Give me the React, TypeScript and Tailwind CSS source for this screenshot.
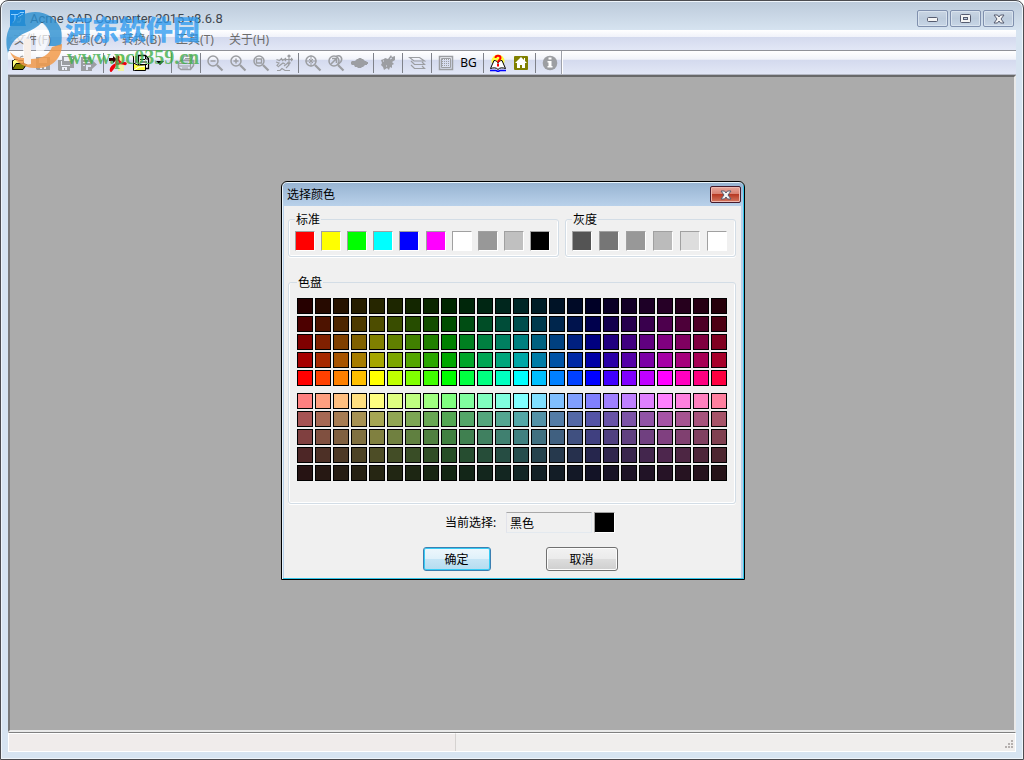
import { useState } from "react";
import type { ReactNode } from "react";

const STANDARD: [string, string][] = [
  ["红色", "#ff0000"],
  ["黄色", "#ffff00"],
  ["绿色", "#00ff00"],
  ["青色", "#00ffff"],
  ["蓝色", "#0000ff"],
  ["洋红", "#ff00ff"],
  ["白色", "#ffffff"],
  ["8", "#989898"],
  ["9", "#c0c0c0"],
  ["黑色", "#000000"],
];

const GRAYS: [string, string][] = [
  ["250", "#545454"],
  ["251", "#767676"],
  ["252", "#989898"],
  ["253", "#bbbbbb"],
  ["254", "#dddddd"],
  ["255", "#ffffff"],
];

const LEVELS = [1, 0.65, 0.5, 0.3, 0.15];

function channel(distance: number) {
  return Math.max(0, Math.min(1, 2 - distance / 60));
}

function paletteColor(column: number, level: number, pale: boolean) {
  const hue = column * 15;
  const parts = [0, 120, 240].map((center) => {
    const d = Math.abs(hue - center);
    const pure = channel(Math.min(d, 360 - d));
    const value = pale ? 0.5 + pure / 2 : pure;
    return Math.round(value * level * 255);
  });
  return `rgb(${parts.join(",")})`;
}

type Pick = (name: string, color: string) => void;

function Swatch({ name, color, onPick }: { name: string; color: string; onPick: Pick }) {
  return (
    <button
      type="button"
      aria-label={name}
      onClick={() => onPick(name, color)}
      className="size-5 border border-t-[#a0a0a0] border-l-[#a0a0a0] border-r-white border-b-white"
      style={{ backgroundColor: color }}
    />
  );
}

function PaletteBlock({ pale, onPick }: { pale: boolean; onPick: Pick }) {
  const levels = pale ? LEVELS : [...LEVELS].reverse();
  return (
    <div className="grid grid-cols-[repeat(24,16px)] gap-0.5">
      {levels.map((level, row) =>
        Array.from({ length: 24 }, (_, column) => {
          const color = paletteColor(column, level, pale);
          const index = 10 + column * 10 + (pale ? row * 2 + 1 : (4 - row) * 2);
          return (
            <button
              key={index}
              type="button"
              aria-label={String(index)}
              onClick={() => onPick(String(index), color)}
              className="size-4 border border-black"
              style={{ backgroundColor: color }}
            />
          );
        }),
      )}
    </div>
  );
}

function Group({ title, className, children }: { title: string; className: string; children: ReactNode }) {
  return (
    <fieldset className={`min-w-0 rounded-[3px] border border-[#d3dde6] shadow-[inset_1px_0_0_#fff,inset_-1px_-1px_0_#fff,0_1px_0_#fff] ${className}`}>
      <legend className="px-px pt-px leading-3.5">{title}</legend>
      {children}
    </fieldset>
  );
}

function Icon({ children }: { children: ReactNode }) {
  return (
    <svg viewBox="0 0 18 18" className="size-4.5" fill="none" aria-hidden="true">
      {children}
    </svg>
  );
}

function Tool({ label, children }: { label: string; children: ReactNode }) {
  return (
    <button type="button" aria-label={label} className="flex h-full w-[23px] shrink-0 items-center justify-center">
      {children}
    </button>
  );
}

function Divider() {
  return (
    <span className="flex h-5 w-1.5 shrink-0 justify-center">
      <span className="w-px bg-[#7f828a]" />
    </span>
  );
}

const G = "#9c9ea2";

function Lens({ children }: { children?: ReactNode }) {
  return (
    <Icon>
      <g stroke={G}>
        <circle cx="7" cy="7" r="5" strokeWidth="1.5" />
        <path d="M11 11l5.500 5.500" strokeWidth="2.200" />
        {children}
      </g>
    </Icon>
  );
}

function Toolbar() {
  return (
    <div className="flex h-6 items-center border-b border-[#b4b8c4] bg-[linear-gradient(to_bottom,#ffffff,#f1f3fa_36%,#d4daee_40%,#e2e7f6)]">
      <Tool label="打开">
        <Icon>
          <path d="M1.500 15.500v-9h1l1-1h3l1 1h5v3" fill="#ffff80" stroke="#000" />
          <path d="M1.500 15.500l3.500-6h11l-4 6z" fill="#808000" stroke="#000" />
          <path d="M9 3.500c2-2 4-1.500 5 .5m1.500-2.500v3h-3" stroke="#777" />
        </Icon>
      </Tool>
      <Tool label="保存">
        <Icon>
          <path d="M2 3h14v13H3l-1-1z" fill={G} />
          <path d="M5 4h8v5H5zM6 12h6v3h-2v-2H8v2H6z" fill="#eceef6" />
        </Icon>
      </Tool>
      <Tool label="另存为">
        <Icon>
          <path d="M5 2h12v12h-4v3H2L1 16V6h4z" fill={G} />
          <path d="M7 3h7v4H7zM4 7h1v4h8v1H4zM5 13h5v3H8v-2H7v2H5zM15 4h1v1h-1z" fill="#eceef6" />
        </Icon>
      </Tool>
      <Tool label="导出">
        <Icon>
          <path d="M1 3h10v3h1l5 4.500-5 4.500v2H1z" fill={G} />
          <path d="M3 5h5v1H3zM3 8h7v1H3zM3 11h2v1H3zM6 11h5v2H8v3H6z" fill="#dfe4f3" />
        </Icon>
      </Tool>
      <Divider />
      <Tool label="转换为 PDF">
        <Icon>
          <path d="M9 1h6v16H9z" fill="#ffff66" fillOpacity=".6" />
          <path d="M0 4h4V2l4 3.500L4 9V7H0z" fill="#300" />
          <path d="M2 17c3-3 6-8 6-13 0-2 2-2 1.500 0-.8 2 2 6 6.500 5 1.500 0 1 2-1 1-3-1.500-7-.5-10 1-2.500 1.500-4 4.500-3 6z" stroke="#f0000c" strokeWidth="1.900" />
        </Icon>
      </Tool>
      <Tool label="批量转换">
        <Icon>
          <path d="M6.500 1.500h7l3 3v10h-10z" fill="#fff" stroke="#000" strokeWidth="1.300" />
          <path d="M8 5.500h5M8 8h7M8 10.500h7M13.500 2v3h3" stroke="#000" />
          <path d="M1.500 2v8M4 2v7" stroke="#000" />
          <path d="M1.500 16.500V9l4 2h8v5.500z" fill="#ffff40" stroke="#000" />
          <path d="M2 16l5-3 6-1" stroke="#fff" />
        </Icon>
      </Tool>
      <button type="button" aria-label="更多" className="flex h-full w-4 shrink-0 items-center justify-center">
        <svg viewBox="0 0 8 4" className="h-1 w-2" aria-hidden="true">
          <path d="M0 0h8L4 4z" fill="#000" />
        </svg>
      </button>
      <Divider />
      <Tool label="打印">
        <Icon>
          <path d="M5 7l2-5h9l-2 5" stroke={G} strokeWidth="1.300" />
          <path d="M1.500 8.500l2.500-2h12.500v5l-3 4H4l-2.500-2z" stroke={G} strokeWidth="1.500" />
          <path d="M8 4.500h5M7 6h5M2 9.500h11l3-2M2 12h11M13.500 9v6M5 14h6" stroke={G} strokeWidth="1.200" />
        </Icon>
      </Tool>
      <Divider />
      <Tool label="缩小"><Lens><path d="M4.500 7h5" strokeWidth="1.500" /></Lens></Tool>
      <Tool label="放大"><Lens><path d="M4.500 7h5M7 4.500v5" strokeWidth="1.500" /></Lens></Tool>
      <Tool label="窗口缩放"><Lens><path d="M4.500 5h5v4h-5z" strokeWidth="1.300" /></Lens></Tool>
      <Tool label="平移">
        <Icon>
          <path d="M1.500 5.500l3 1 2-2 1 2 2-1.500M1 8l3 1-2 2.500 2 1.500M4 12l4-3 2 1M9 12l4-3 1 2-3 3M2 16.500h3l2-2 3 2h5" stroke={G} strokeWidth="1.200" />
          <path d="M14 1v9M9.500 5.500h8M12.500 2.500L14 1l1.500 1.500M12.500 8.500L14 10l1.500-1.500M11 4L9.500 5.500 11 7M16 4l1.500 1.500L16 7" stroke={G} strokeWidth="1.200" />
        </Icon>
      </Tool>
      <Divider />
      <Tool label="全部缩放"><Lens><path d="M1.500 7h11M7 1.500v11M5 5l4 4M9 5l-4 4" /></Lens></Tool>
      <Tool label="上一缩放">
        <Lens>
          <path d="M4 10l5-5M5 4.500h4.500V9M9 2.500c4-2 7 1 5 5l-3 3" strokeWidth="1.600" />
        </Lens>
      </Tool>
      <Tool label="预览">
        <Icon>
          <path d="M1 8l1-1h3l2-2h1l1-1h2l1 1h1l2 2h1l1 1h1v2h-1v1h-2l-2 2h-1l-1 1H8l-1-1H5l-1-2H2l-1-1z" fill={G} />
        </Icon>
      </Tool>
      <Divider />
      <Tool label="重生成">
        <Icon>
          <path d="M2 6l3-1 1-1 3 1 3-4 1 2 3-1v4l-3 2 2 2-2 1v3l-2-1-1 3-2-2-3 2-1-3-2-2 1-2z" fill={G} />
          <path d="M4 7h1M11 5l2-1M7 12h1" stroke="#dfe4f3" />
        </Icon>
      </Tool>
      <Divider />
      <Tool label="图层">
        <Icon>
          <path d="M1.500 3.500h10l5 3.500H6zM3 7l3.500 3.500H16.500L14 8M3 11l3.500 3.500H16.500L14 12" stroke={G} strokeWidth="1.200" />
        </Icon>
      </Tool>
      <Divider />
      <Tool label="填充">
        <Icon>
          <path d="M2.500 2.500h13v13h-13z" stroke={G} strokeWidth="1.500" />
          <path d="M5 5.500h8M5 7.500h8M5 9.500h8M5 11.500h8" stroke={G} strokeDasharray="1 1" />
          <path d="M4.500 4.500h9v9h-9z" stroke={G} />
        </Icon>
      </Tool>
      <button type="button" className="flex h-full w-[23px] shrink-0 items-center justify-center text-xs text-black">
        BG
      </button>
      <Divider />
      <Tool label="帮助">
        <Icon>
          <circle cx="9" cy="7" r="6.500" fill="#ffff40" />
          <path d="M1.500 14.500L5 6.500c2 0 4 1 4 3 0-2 2-3 4-3l3.500 8c-3-1-6-1-7.500 1-1.500-2-4.500-2-7.500-1z" fill="#fff" stroke="#000" />
          <path d="M1 16.500h6l2 1 2-1h6" stroke="#00f" strokeWidth="1.600" />
          <path d="M6.500 4c0-3 5-3 5 0 0 2-2.500 2-2.500 4.500M9 10v2.500" stroke="#f00" strokeWidth="2" />
        </Icon>
      </Tool>
      <Tool label="主页">
        <Icon>
          <rect x="2" y="2" width="14" height="14" rx="1" fill="#808000" />
          <path d="M9 3l6 6h-2v5h-3v-3H8v3H5V9H3zM12 4h1v3h-1z" fill="#fff" />
        </Icon>
      </Tool>
      <Divider />
      <Tool label="关于">
        <Icon>
          <circle cx="9" cy="9" r="7.300" fill={G} />
          <path d="M7.500 3.500h3v2h-3zM6.500 7h4v5h1v1.500h-5V12h1V8.500h-1z" fill="#fff" />
        </Icon>
      </Tool>
      <span className="h-full w-0.5 border-l border-[#9ea1aa] bg-white" />
    </div>
  );
}

function CaptionButton({ label, children }: { label: string; children: ReactNode }) {
  return (
    <button
      type="button"
      aria-label={label}
      className="flex h-[17px] w-[31px] items-center justify-center rounded-[2px] border border-[#8090ae] bg-[linear-gradient(to_bottom,#c9d5e3,#bccbdc_50%,#c8d6e6)] shadow-[inset_0_0_0_1px_#d9e3ee]"
    >
      {children}
    </button>
  );
}

function Cross() {
  return (
    <svg viewBox="0 0 12 10" className="h-2.5 w-3" aria-hidden="true">
      <path d="M1 1h3.500L6 3l1.500-2H11L8 5l3 4H7.500L6 7 4.500 9H1l3-4z" fill="#f4f4f4" stroke="#565c70" />
    </svg>
  );
}

function Watermark() {
  return (
    <div className="pointer-events-none absolute top-2.5 left-1 flex items-start gap-0.5 font-bold">
      <svg viewBox="0 0 58 58" className="size-[58px]" aria-hidden="true">
        <path d="M22 19l15-7c7 6 8 12 5 21-2 7-6 11-11 13V25h-6v28l-7-2V30H5c3-5 9-9 17-11z" fill="#fff" fillOpacity=".7" />
        <path d="M3 42C-3 22 8 1 30 1c12 0 22 7 26 17 1 5 1 11 0 17H44c3-9 1-17-7-24-4 5-10 8-17 11C11 26 6 32 3 42z" fill="#2b8fd0" fillOpacity=".8" />
        <path d="M57 33c0 16-12 25-27 24C18 57 8 49 5 41c3 3 8 6 14 6V33h7v15c11 0 18-4 21-12z" fill="#f29a4a" fillOpacity=".85" />
        <path d="M19 28h7v25c-3 1-5 0-7-1z" fill="#f8efe8" />
      </svg>
      <div className="flex flex-col">
        <span className="font-['Noto_Sans_CJK_SC',sans-serif] text-[27px] leading-9 font-black text-[#2f9bf0]/80">河东软件园</span>
        <span className="pl-0.5 font-['Liberation_Serif',serif] text-xl leading-5 text-[#3fae49]/80">www.pc0359.cn</span>
      </div>
    </div>
  );
}

function ColorDialog() {
  const [name, setName] = useState("黑色");
  const [color, setColor] = useState("#000000");
  const pick: Pick = (nextName, nextColor) => {
    setName(nextName);
    setColor(nextColor);
  };

  return (
    <section
      role="dialog"
      aria-labelledby="dialog-title"
      className="w-[464px] rounded-t-md border border-black bg-[#f0f0f0] text-xs text-black shadow-[inset_1px_1px_0_#e8f4fc,inset_-1px_-1px_0_#35c5e8,inset_2px_0_0_#b9d1ea,inset_-3px_0_0_#b9d1ea]"
    >
      <header className="m-px mb-0 flex h-[23px] items-center justify-between rounded-t bg-[linear-gradient(to_bottom,#98b4d2,#b9d1ea)] pr-0.5 pl-1">
        <h2 id="dialog-title">选择颜色</h2>
        <button
          type="button"
          aria-label="关闭"
          className="flex h-[17px] w-[31px] items-center justify-center rounded-[2px] border border-[#451a2b] bg-[linear-gradient(to_bottom,#e8a79c,#d98272_45%,#b83a24_50%,#d37860)] shadow-[inset_0_0_0_1px_#eeb9b0]"
        >
          <Cross />
        </button>
      </header>

      <form className="pt-1.5 pr-2 pb-2 pl-1.5" onSubmit={(event) => event.preventDefault()}>
        <div className="flex gap-1.5">
          <Group title="标准" className="h-[45px] w-[271px] pr-2 pl-1.5">
            <div className="flex justify-between pt-1">
              {STANDARD.map(([label, value]) => (
                <Swatch key={label} name={label} color={value} onPick={pick} />
              ))}
            </div>
          </Group>
          <Group title="灰度" className="h-[45px] flex-1 pr-2 pl-1.5">
            <div className="flex justify-between pt-1">
              {GRAYS.map(([label, value]) => (
                <Swatch key={label} name={label} color={value} onPick={pick} />
              ))}
            </div>
          </Group>
        </div>

        <Group title="色盘" className="mt-[18px] h-[229px] px-2">
          <div className="flex flex-col gap-[7px] pt-2">
            <PaletteBlock pale={false} onPick={pick} />
            <PaletteBlock pale onPick={pick} />
          </div>
        </Group>

        <div className="mt-2 flex items-center justify-center gap-0.5 pl-9">
          <label htmlFor="current-color" className="pr-2">当前选择:</label>
          <input
            id="current-color"
            readOnly
            value={name}
            className="h-[21px] w-[86px] border border-t-[#a8a8a8] border-r-[#e3e9ef] border-b-[#e3e9ef] border-l-[#e2e3ea] px-[3px] outline-none"
          />
          <span
            className="size-[21px] border border-t-[#a0a0a0] border-r-white border-b-white border-l-[#a0a0a0]"
            style={{ backgroundColor: color }}
          />
        </div>

        <div className="mt-3.5 flex justify-center gap-[55px] pl-4">
          <button
            type="submit"
            className="h-6 w-[68px] rounded-[3px] border border-[#3c7fb1] bg-[linear-gradient(to_bottom,#eef7fc,#e0f1fa_48%,#c6e5f5_50%,#b4dcf0)] pt-0.5 shadow-[inset_0_0_0_1px_#36ccf5]"
          >
            确定
          </button>
          <button
            type="button"
            className="h-6 w-[72px] rounded-[3px] border border-[#707070] bg-[linear-gradient(to_bottom,#f2f2f2,#ebebeb_48%,#dddddd_50%,#cfcfcf)] pt-0.5 shadow-[inset_0_0_0_1px_#fcfcfc]"
          >
            取消
          </button>
        </div>
      </form>
    </section>
  );
}

export default function App() {
  return (
    <div className="relative flex min-h-screen flex-col rounded-t-lg border border-[#4c4c50] bg-[linear-gradient(to_bottom,#bccada,#d7e4f1_30px)] px-[7px] pb-[7px] font-['Noto_Sans','Noto_Sans_CJK_SC',sans-serif] text-xs shadow-[inset_0_0_0_1px_#eff5fb]">
      <header className="flex h-[29px] shrink-0 items-center justify-between pt-1.5 pr-0.5">
        <div className="flex items-center gap-1 pl-0.5">
          <svg viewBox="0 0 16 16" className="size-4" aria-hidden="true">
            <path d="M0 0h15v13l1 3H0z" fill="#1687e0" />
            <path d="M1 4.500h7l2-2h4M5 5v5l-2 3M8 7l5-3M7 12h3l1-4" stroke="#8ed0ff" fill="none" />
          </svg>
          <h1 className="font-['Roboto',sans-serif] text-[13px] text-[#3f474f]">Acme CAD Converter 2015 v8.6.8</h1>
        </div>
        <div className="flex gap-0.5">
          <CaptionButton label="最小化">
            <svg viewBox="0 0 12 6" className="h-1.5 w-3" aria-hidden="true">
              <rect x=".5" y="1.500" width="10" height="4" rx="1" fill="#f4f4f4" stroke="#565c70" />
            </svg>
          </CaptionButton>
          <CaptionButton label="最大化">
            <svg viewBox="0 0 12 10" className="h-2.5 w-3" aria-hidden="true">
              <rect x=".5" y=".5" width="10" height="8" rx="1" fill="#f4f4f4" stroke="#565c70" />
              <rect x="3.500" y="3.500" width="4" height="2" fill="#bccbdc" stroke="#565c70" />
            </svg>
          </CaptionButton>
          <CaptionButton label="关闭窗口">
            <Cross />
          </CaptionButton>
        </div>
      </header>

      <nav className="flex h-[21px] shrink-0 items-center gap-[15px] border-b border-[#8f9198] bg-[linear-gradient(to_bottom,#ffffff,#f1f3fa_33%,#d4daee_37%,#e2e7f6)] pl-1.5 text-[#6d6d6d]">
        <button type="button">文件(F)</button>
        <button type="button">选项(O)</button>
        <button type="button">转换(B)</button>
        <button type="button">工具(T)</button>
        <button type="button">关于(H)</button>
      </nav>
      <Toolbar />

      <main className="flex flex-1 border-2 border-t-[#696969] border-r-[#e9e9e9] border-b-[#e9e9e9] border-l-[#7a7a7a] bg-[#ababab]" />

      <footer className="flex h-5 shrink-0 border border-t-[#808080] border-r-white border-b-white border-l-white bg-[#f0f0f0]">
        <div className="w-[447px] border-t border-r border-t-white border-r-[#d5d2d0] bg-[#f0eceb]" />
        <div className="flex flex-1 items-end justify-end border-t border-white bg-[#f0eeed]">
          <svg viewBox="0 0 10 10" className="m-px size-2.5" fill="#b5b0ae" aria-hidden="true">
            <path d="M7 0h2v2H7zM4 3h2v2H4zM7 3h2v2H7zM1 6h2v2H1zM4 6h2v2H4zM7 6h2v2H7z" />
          </svg>
        </div>
      </footer>

      <Watermark />

      <div className="absolute inset-0 flex items-center justify-center pt-px pl-0.5">
        <ColorDialog />
      </div>
    </div>
  );
}
